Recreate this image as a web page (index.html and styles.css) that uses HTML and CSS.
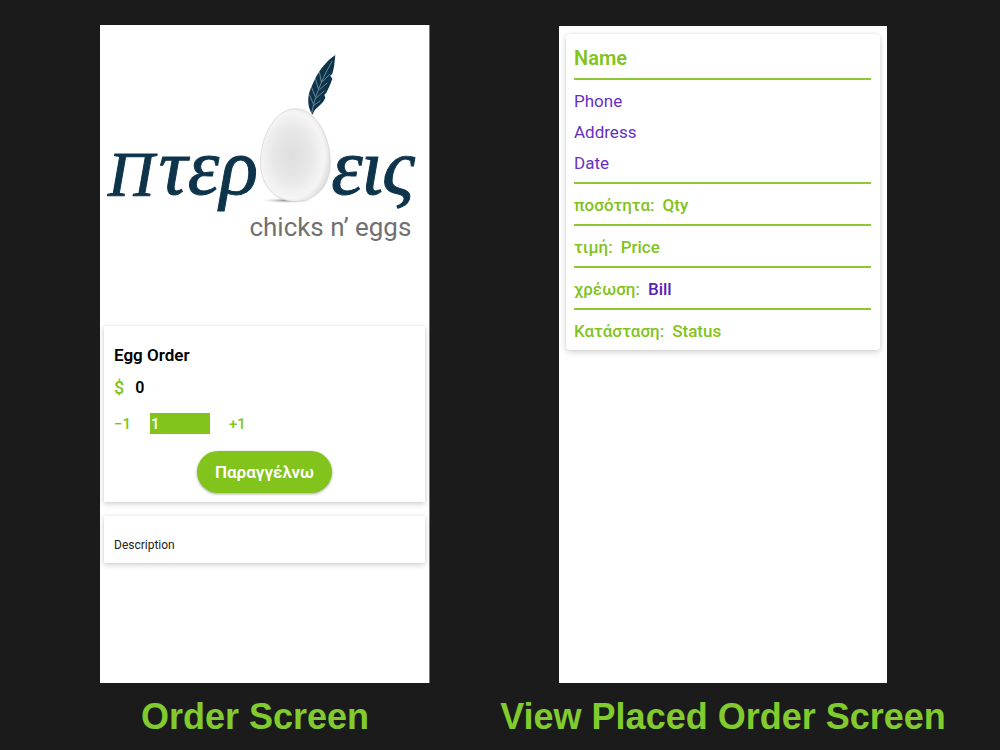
FILE: index.html
```html
<!DOCTYPE html>
<html lang="el">
<head>
<meta charset="utf-8">
<meta name="viewport" content="width=device-width, initial-scale=1">
<title>Order Screens</title>
<link rel="stylesheet" href="styles.css">
</head>
<body>
<main class="board">
  <figure class="shot">
    <div class="phone phone-order">
      <svg class="logo" viewBox="0 0 330 300" role="img" aria-label="Πτερόεις chicks n' eggs">
        <defs>
          <radialGradient id="egg" cx="0.45" cy="0.5" r="0.62">
            <stop offset="0" stop-color="#dedede"/>
            <stop offset="0.45" stop-color="#e8e8e8"/>
            <stop offset="0.75" stop-color="#f5f5f5"/>
            <stop offset="1" stop-color="#d0d0d0"/>
          </radialGradient>
          <radialGradient id="shade">
            <stop offset="0" stop-color="#777"/>
            <stop offset="1" stop-color="#fff" stop-opacity="0"/>
          </radialGradient>
        </defs>
        <ellipse cx="188" cy="176" rx="29" ry="3" fill="url(#shade)"/>
        <path d="M196 84C216 84 231 111 231 138C231 161 217 177 196 177C175 177 161 161 161 138C161 111 176 84 196 84Z" fill="url(#egg)" stroke="#d5d0ce" stroke-width="0.7"/>
        <path d="M213 90C207 80 208 70 213 60C218 47 227 36 236 30C235 40 235 42 233 49L231 51L233 54C231 60 229 64 227 68L225 70L226 73C223 80 218 82 215 86L213 90Z" fill="#0d344b"/>
        <path d="M212 90C215 73 222 55 233 36M214 79L210 70M216 72L212 62M219 64L216 54M222 57L220 47M214 81L221 76M217 73L225 66M220 65L228 58M223 57L231 49" fill="none" stroke="#a9bac4" stroke-width="0.6"/>
        <g class="word">
          <text class="word-cap" x="8" y="172">Π</text>
          <text class="word-low" x="59" y="170">τ</text>
          <text class="word-low" x="88" y="170">ε</text>
          <text class="word-low" x="120" y="170">ρ</text>
          <text class="word-low" x="232" y="170">ε</text>
          <text class="word-low" x="262" y="170">ι</text>
          <text class="word-low" x="283" y="170">ς</text>
        </g>
        <text class="tagline" x="150" y="212">chicks n’ eggs</text>
      </svg>
      <form class="card order-card">
        <h2 class="order-title">Egg Order</h2>
        <p class="price"><span class="currency">$</span><output class="amount" for="qty">0</output></p>
        <div class="stepper">
          <button class="step" type="button">−1</button>
          <input class="qty" id="qty" type="text" value="1" aria-label="ποσότητα">
          <button class="step" type="button">+1</button>
        </div>
        <button class="submit" type="button">Παραγγέλνω</button>
      </form>
      <section class="card description">Description</section>
    </div>
    <figcaption class="caption caption-order">Order Screen</figcaption>
  </figure>
  <figure class="shot">
    <div class="phone phone-placed">
      <article class="card placed-card">
        <h2 class="name">Name</h2>
        <div class="contact">
          <p>Phone</p>
          <p>Address</p>
          <p>Date</p>
        </div>
        <dl class="facts">
          <div class="fact"><dt>ποσότητα:</dt><dd>Qty</dd></div>
          <div class="fact"><dt>τιμή:</dt><dd>Price</dd></div>
          <div class="fact"><dt>χρέωση:</dt><dd class="bill">Bill</dd></div>
          <div class="fact"><dt>Κατάσταση:</dt><dd>Status</dd></div>
        </dl>
      </article>
    </div>
    <figcaption class="caption">View Placed Order Screen</figcaption>
  </figure>
</main>
</body>
</html>
```
FILE: styles.css
```css
* { box-sizing: border-box; }

body, h2, p, figure, dl, dd { margin: 0; }

body {
  background: #1b1b1b;
  font-family: Roboto, "Noto Sans", sans-serif;
}

.board {
  display: grid;
  grid-template-columns: 330fr 446fr;
  gap: 70px;
  min-height: 100vh;
  padding: 25px 54px 0 100px;
}

.shot {
  display: flex;
  flex-direction: column;
}

.phone {
  flex: 1;
  background: #fff;
}

.phone-order {
  padding: 0 4px;
  border-right: 1px solid #777;
}

.phone-placed {
  margin: 1px 59px 0;
  padding: 8px 7px;
}

.logo {
  display: block;
  width: calc(100% + 8px);
  margin: 0 -4px;
}

.word {
  fill: #0d344b;
  stroke: #0d344b;
  font-family: "Liberation Serif", serif;
  font-style: italic;
}

.word-cap { font-size: 64px; }
.word-low { font-size: 80px; }

.tagline {
  fill: #707070;
  font-family: Roboto, sans-serif;
  font-size: 26px;
}

.card {
  background: #fff;
  box-shadow: 0 2px 6px rgba(0, 0, 0, 0.18), 0 0 3px rgba(0, 0, 0, 0.06);
}

.order-card {
  display: flex;
  flex-direction: column;
  margin-top: 2px;
  padding: 18px 10px 9px;
}

.order-title {
  font-size: 17px;
  font-weight: 600;
  line-height: 22px;
}

.price {
  display: flex;
  gap: 11px;
  margin-top: 11px;
  font-size: 16px;
  font-weight: 600;
  line-height: 22px;
}

.currency {
  color: #82c31c;
  font-size: 18px;
  font-weight: 500;
}

.stepper {
  display: flex;
  align-items: center;
  gap: 19px;
  margin-top: 14px;
}

.step {
  padding: 0;
  border: 0;
  background: none;
  color: #82c31c;
  font: 500 15px/20px Roboto, sans-serif;
}

.qty {
  width: 60px;
  height: 21px;
  padding: 0 1px;
  border: 0;
  background: #82c31c;
  color: #fff;
  font: 500 15px/20px Roboto, sans-serif;
}

.submit {
  align-self: center;
  margin-top: 17px;
  padding: 10px 18px;
  border: 0;
  border-radius: 21px;
  background: #82c31c;
  box-shadow: 0 1px 3px rgba(0, 0, 0, 0.35);
  color: #fff;
  font: 600 17px/22px Roboto, sans-serif;
}

.description {
  margin-top: 14px;
  padding: 20px 10px 9px;
  color: #222;
  font-size: 12px;
  line-height: 18px;
}

.placed-card {
  padding: 10px 9px 0 8px;
  border-radius: 4px;
}

.name {
  padding-bottom: 6px;
  color: #82c31c;
  font-size: 20px;
  font-weight: 600;
  line-height: 28px;
}

.contact {
  display: grid;
  gap: 9px;
  padding: 10px 0 8px;
  border-top: 2px solid #8dc834;
  color: #6630c4;
  font-size: 17px;
  line-height: 22px;
}

.fact {
  display: flex;
  gap: 8px;
  padding: 10px 0 8px;
  border-top: 2px solid #8dc834;
  color: #82c31c;
  font-size: 17px;
  font-weight: 500;
  line-height: 22px;
}

.bill { color: #5a20b8; }

.caption {
  padding: 10px 0 9px;
  color: #82cb2f;
  font: bold 36px/48px "Liberation Sans", Arial, sans-serif;
  text-align: center;
  white-space: nowrap;
}

.caption-order { padding-right: 20px; }
```
